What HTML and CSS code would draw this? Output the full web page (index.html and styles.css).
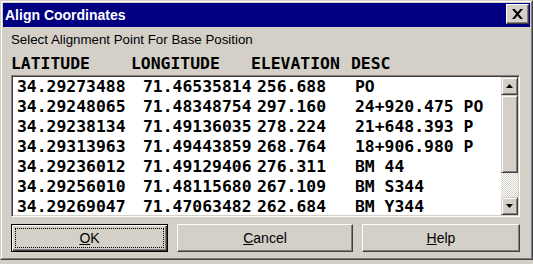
FILE: index.html
```html
<!DOCTYPE html>
<html>
<head>
<meta charset="utf-8">
<link rel="stylesheet" href="styles.css">
</head>
<body>
<div class="window">
  <div class="frame">
    <div class="titlebar">
      <span class="title">Align Coordinates</span>
      <button class="close" aria-label="Close">
        <svg width="11" height="10" viewBox="0 0 11 10"><path d="M0 0h2.6l2.9 3.3L8.4 0H11L6.8 5 11 10H8.4L5.5 6.7 2.6 10H0l4.2-5z" fill="#000"/></svg>
      </button>
    </div>
    <div class="content">
      <div class="subtitle">Select Alignment Point For Base Position</div>
      <div class="header">
        <span>LATITUDE</span><span>LONGITUDE</span><span>ELEVATION</span><span>DESC</span>
      </div>
      <div class="listbox">
        <div class="rows">
          <div class="row"><span>34.29273488</span><span>71.46535814</span><span>256.688</span><span>PO</span></div>
          <div class="row"><span>34.29248065</span><span>71.48348754</span><span>297.160</span><span>24+920.475 PO</span></div>
          <div class="row"><span>34.29238134</span><span>71.49136035</span><span>278.224</span><span>21+648.393 P</span></div>
          <div class="row"><span>34.29313963</span><span>71.49443859</span><span>268.764</span><span>18+906.980 P</span></div>
          <div class="row"><span>34.29236012</span><span>71.49129406</span><span>276.311</span><span>BM 44</span></div>
          <div class="row"><span>34.29256010</span><span>71.48115680</span><span>267.109</span><span>BM S344</span></div>
          <div class="row"><span>34.29269047</span><span>71.47063482</span><span>262.684</span><span>BM Y344</span></div>
        </div>
        <div class="scrollbar">
          <div class="sbtn"><svg width="7" height="4" viewBox="0 0 7 4"><path d="M3.5 0L7 4H0z" fill="#000"/></svg></div>
          <div class="thumb"></div>
          <div class="track"></div>
          <div class="sbtn"><svg width="7" height="4" viewBox="0 0 7 4"><path d="M0 0h7L3.5 4z" fill="#000"/></svg></div>
        </div>
      </div>
      <div class="buttons">
        <button class="btn default ok"><span class="focus"><u>O</u>K</span></button>
        <button class="btn cancel"><u>C</u>ancel</button>
        <button class="btn help"><u>H</u>elp</button>
      </div>
    </div>
  </div>
</div>
</body>
</html>
```

FILE: styles.css
```css
html, body {
  margin: 0;
  padding: 0;
}
body {
  width: 533px;
  height: 264px;
  background: #d4d0c8;
  overflow: hidden;
  font-family: "Liberation Sans", Arial, sans-serif;
}
.window {
  width: 533px;
  height: 260px;
  box-sizing: border-box;
  border: 1px solid;
  border-color: #d4d0c8 #404040 #404040 #d4d0c8;
  background: #d4d0c8;
}
.frame {
  height: 100%;
  box-sizing: border-box;
  border: 1px solid;
  border-color: #ffffff #808080 #808080 #ffffff;
  padding: 1px;
  display: flex;
  flex-direction: column;
}
.titlebar {
  height: 24px;
  background: #000080;
  display: flex;
  justify-content: space-between;
  align-items: flex-start;
  padding-left: 2px;
}
.title {
  color: #fff;
  font-weight: bold;
  font-size: 14px;
  line-height: 24px;
}
.close {
  margin: 1px 1px 0 0;
  width: 23px;
  height: 20px;
  padding: 0;
  background: #d4d0c8;
  border: 1px solid;
  border-color: #ffffff #404040 #404040 #ffffff;
  box-shadow: inset -1px -1px 0 #808080;
  display: flex;
  align-items: center;
  justify-content: center;
}
.content {
  padding: 0 10px 0 8px;
  display: flex;
  flex-direction: column;
}
.subtitle {
  margin-top: 5px;
  height: 16px;
  line-height: 16px;
  font-size: 13.3px;
  color: #000;
}
.header, .row {
  font-family: "DejaVu Sans Mono", "Liberation Mono", monospace;
  font-weight: bold;
  font-size: 16.4px;
  color: #000;
  display: grid;
  white-space: pre;
}
.header {
  margin-top: 7px;
  height: 18px;
  line-height: 18px;
  grid-template-columns: 120px 120px 100px auto;
}
.listbox {
  margin-top: 2px;
  height: 142px;
  box-sizing: border-box;
  border: 1px solid;
  border-color: #808080 #ffffff #ffffff #808080;
  box-shadow: inset 1px 1px 0 #404040, inset -1px -1px 0 #d4d0c8;
  padding: 1px;
  display: flex;
  background: #fff;
}
.rows {
  flex: 1;
  overflow: hidden;
  padding-left: 4px;
}
.row {
  height: 20px;
  line-height: 20px;
  grid-template-columns: 126px 114px 98px auto;
}
.scrollbar {
  width: 17px;
  display: flex;
  flex-direction: column;
  background: #d4d0c8;
}
.sbtn, .thumb {
  box-sizing: border-box;
  border: 1px solid;
  border-color: #d4d0c8 #404040 #404040 #d4d0c8;
  box-shadow: inset 1px 1px 0 #ffffff, inset -1px -1px 0 #808080;
  background: #d4d0c8;
}
.sbtn {
  height: 18px;
  display: flex;
  align-items: center;
  justify-content: center;
}
.thumb {
  height: 78px;
}
.track {
  flex: 1;
  background: repeating-conic-gradient(#ffffff 0 25%, #d4d0c8 0 50%) 0 0 / 2px 2px;
}
.buttons {
  margin-top: 7px;
  display: flex;
  gap: 9px;
}
.btn {
  height: 28px;
  padding: 0;
  font-family: "Liberation Sans", Arial, sans-serif;
  font-size: 14px;
  color: #000;
  background: #d4d0c8;
  box-sizing: border-box;
  border: 1px solid;
  border-color: #ffffff #404040 #404040 #ffffff;
  box-shadow: inset -1px -1px 0 #808080;
}
.ok { width: 157px; }
.cancel { width: 176px; }
.help { width: 158px; }
.btn.default {
  border: 1px solid #000;
  box-shadow: inset 1px 1px 0 #ffffff, inset -1px -1px 0 #404040, inset -2px -2px 0 #808080;
  padding: 3px;
  display: flex;
}
.focus {
  flex: 1;
  border: 1px dotted #000;
  display: flex;
  align-items: center;
  justify-content: center;
}
u {
  text-decoration: underline;
  text-underline-offset: 1px;
}
```
